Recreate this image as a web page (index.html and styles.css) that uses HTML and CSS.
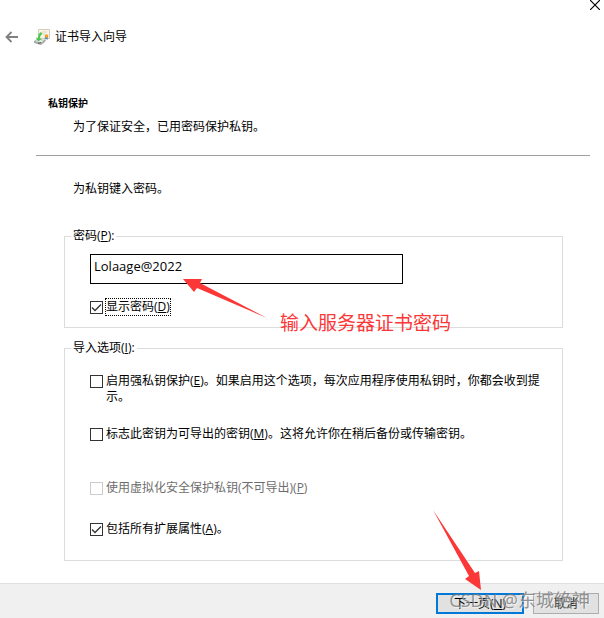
FILE: index.html
```html
<!DOCTYPE html>
<html lang="zh-CN">
<head>
<meta charset="utf-8">
<meta name="viewport" content="width=device-width, initial-scale=1">
<title>证书导入向导</title>
<link rel="stylesheet" href="styles.css">
</head>
<body>
<form class="wizard">
  <button class="close" type="button" aria-label="关闭">
    <svg width="10" height="10" viewBox="0 0 10 10"><path d="M0 0L10 10M10 0L0 10" stroke="#000" stroke-width="1.2"/></svg>
  </button>
  <header class="titlebar">
    <button class="back" type="button" aria-label="返回">
      <svg width="14" height="12" viewBox="0 0 14 12" fill="none" stroke="#808080" stroke-width="1.8"><path d="M13 6H1.5M6.5 1L1.5 6L6.5 11"/></svg>
    </button>
    <svg class="cert" width="16" height="16" viewBox="0 0 16 16">
      <path d="M4.500.5H15.500V9.500H4.500Z" fill="#f8f4e9" stroke="#d5cbb6"/>
      <path d="M8 3H13M9 5H11" stroke="#dcd5c6"/>
      <path d="M11 8L10.500 11L12 10L13.500 11L14 8Z" fill="#658fb3"/>
      <circle cx="12.500" cy="7" r="1.800" fill="#f0a020"/>
      <path d="M0 12L3 10L12 11L11 13L7 16L0 14Z" fill="#a9adaa"/>
      <path d="M1 12L4 10.500L10 11.500L7 13.500Z" fill="#e8ebe8"/>
      <path d="M7 3L8.500 5C6.500 6 6 7.500 6 9.500L8 10L4 12.500L2 8.500L4 9C4 6 5 4 7 3Z" fill="#49c94e"/>
      <path d="M4 14.500L7 13.500" stroke="#555c57"/>
    </svg>
    <span>证书导入向导</span>
  </header>
  <section class="intro">
    <h1>私钥保护</h1>
    <p>为了保证安全，已用密码保护私钥。</p>
  </section>
  <main class="content">
    <p class="prompt">为私钥键入密码。</p>
    <fieldset class="group password">
      <legend><label for="password">密码(<u>P</u>):</label></legend>
      <input class="text" id="password" type="text" value="Lolaage@2022">
      <div class="option">
        <input id="show" type="checkbox" checked>
        <label class="focused" for="show">显示密码(<u>D</u>)</label>
      </div>
      <svg class="arrow arrow-password" width="86" height="42" viewBox="0 0 86 42"><path d="M0 0L19 0L17 4L84 39L14 9L11 13Z" fill="#fb3737"/></svg>
      <span class="note">输入服务器证书密码</span>
    </fieldset>
    <fieldset class="group imports">
      <legend>导入选项(<u>I</u>):</legend>
      <div class="option">
        <input id="strong" type="checkbox">
        <label for="strong">启用强私钥保护(<u>E</u>)。如果启用这个选项，每次应用程序使用私钥时，你都会收到提示。</label>
      </div>
      <div class="option">
        <input id="exportable" type="checkbox">
        <label for="exportable">标志此密钥为可导出的密钥(<u>M</u>)。这将允许你在稍后备份或传输密钥。</label>
      </div>
      <div class="option unavailable">
        <input id="virtual" type="checkbox" disabled>
        <label for="virtual">使用虚拟化安全保护私钥(不可导出)(<u>P</u>)</label>
      </div>
      <div class="option">
        <input id="extended" type="checkbox" checked>
        <label for="extended">包括所有扩展属性(<u>A</u>)。</label>
      </div>
    </fieldset>
  </main>
  <footer class="actions">
    <button class="next" type="button">下一页(<u>N</u>)</button>
    <button class="cancel" type="button">取消</button>
    <svg class="arrow arrow-next" width="50" height="80" viewBox="0 0 50 80"><path d="M0 0L42 63L46 61L48 80L32 69L36 66Z" fill="#fb3737"/></svg>
    <span class="watermark">CSDN @东城絶神</span>
  </footer>
</form>
</body>
</html>
```

FILE: styles.css
```css
* { box-sizing: border-box; }

body {
  margin: 0;
  background: #fff;
  color: #000;
  font: 12px/16px "Open Sans", "Noto Sans CJK SC", sans-serif;
}

h1, p, fieldset, legend { margin: 0; padding: 0; }

button, input { font: inherit; color: inherit; }

u { text-underline-offset: 1px; }

.wizard {
  position: relative;
  display: flex;
  flex-direction: column;
  min-height: 100vh;
  overflow: hidden;
}

.close, .back {
  display: flex;
  padding: 0;
  border: 0;
  background: none;
}

.close { position: absolute; top: 0; right: 4px; }

.titlebar {
  display: flex;
  align-items: center;
  padding: 29px 5px 0;
}

.cert { margin: 0 5px 0 15px; }

.intro {
  margin: 50px 14px 0 36px;
  padding: 0 12px 20px;
  border-bottom: 1px solid #a0a0a0;
}

.intro h1 { font-size: 10px; line-height: 16px; }

.intro p { padding: 8px 0 0 25px; }

.content { padding: 25px 41px 22px 64px; }

.prompt { padding-left: 9px; }

.group {
  position: relative;
  min-width: 0;
  border: 1px solid #dcdcdc;
}

.group legend { margin-left: -19px; padding: 0 2px; }

.password { margin-top: 31px; padding: 10px 25px 12px; }

.text {
  display: block;
  width: 70%;
  height: 30px;
  margin-bottom: 15px;
  padding: 0 3px 6px;
  border: 1px solid #000;
  border-radius: 0;
  outline: 0;
  background: #fff;
  font-size: 13px;
}

.imports {
  display: grid;
  gap: 21px;
  margin-top: 12px;
  padding: 17px 16px 23px 25px;
}

.option { display: flex; align-items: flex-start; gap: 3px; }

.unavailable { padding: 17px 0 4px; }

.option input {
  flex: none;
  appearance: none;
  width: 13px;
  height: 13px;
  margin: 2px 0 0;
  border: 1px solid #333;
  background: #fff;
}

.option input:checked {
  background: url("data:image/svg+xml,%3Csvg xmlns='http://www.w3.org/2000/svg' viewBox='0 0 11 11'%3E%3Cpath d='M1 5.500L4 8.500L10 2.500' fill='none' stroke='%23333' stroke-width='1.300'/%3E%3C/svg%3E");
}

.option input:disabled { border-color: #ccc; }

.option input:disabled + label { color: #6d6d6d; }

.focused { outline: 1px dotted #000; }

.arrow { position: absolute; pointer-events: none; }

.arrow-password { left: 118px; top: 35px; }

.note {
  position: absolute;
  left: 215px;
  bottom: -10px;
  color: #fb3737;
  font-size: 19px;
  line-height: 28px;
  white-space: nowrap;
}

.actions {
  position: relative;
  display: flex;
  flex: 1;
  align-items: flex-start;
  justify-content: flex-end;
  gap: 9px;
  padding: 9px 5px 4px;
  border-top: 1px solid #dfdfdf;
  background: #f0f0f0;
}

.actions button {
  height: 21px;
  padding: 0;
  border: 1px solid #adadad;
  background: #e1e1e1;
  line-height: 16px;
}

.actions .next { width: 88px; border: 2px solid #0078d7; }

.actions .cancel { width: 66px; }

.arrow-next { right: 121px; top: -74px; }

.watermark {
  position: absolute;
  top: 4px;
  right: 14px;
  color: rgb(120 120 120 / 80%);
  font-size: 18px;
  line-height: 24px;
  text-shadow: 1px 1px 1px rgb(255 255 255 / 60%);
  white-space: nowrap;
  pointer-events: none;
}
```
